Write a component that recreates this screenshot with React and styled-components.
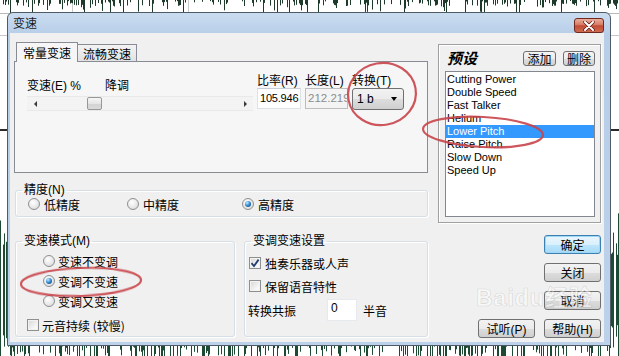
import React from 'react';
import styled, { createGlobalStyle, css } from 'styled-components';

const GlobalStyle = createGlobalStyle`
  html, body { margin: 0; padding: 0; background: #fff; }
  body {
    font-family: "Liberation Sans", "Noto Sans CJK SC", sans-serif;
    font-size: 12px;
    color: #000;
  }
  * { box-sizing: border-box; }
`;

const Stage = styled.div`
  position: relative;
  width: 619px;
  height: 356px;
  overflow: hidden;
  background: #fff;
`;

const WaveSvg = styled.svg`
  position: absolute;
  left: 0;
  top: 0;
`;

const Overlay = styled.svg`
  position: absolute;
  left: 0;
  top: 0;
  pointer-events: none;
  z-index: 5;
`;

const Watermark = styled.div`
  position: absolute;
  left: 476px;
  top: 279px;
  z-index: 4;
  font-family: "Liberation Sans", "Noto Sans CJK SC", sans-serif;
  font-weight: bold;
  font-size: 23px;
  letter-spacing: 1px;
  color: rgba(255, 255, 255, 0.5);
  -webkit-text-stroke: 0.6px rgba(140, 140, 140, 0.3);
  pointer-events: none;
`;

/* ---------- dialog frame ---------- */
const Dialog = styled.div`
  position: absolute;
  left: 7px;
  top: 12px;
  width: 604px;
  height: 334px;
  border: 1px solid #4f5a66;
  border-radius: 6px 6px 0 0;
  background: linear-gradient(#cadcf0, #b7cee8 22px, #bcd2eb);
  display: flex;
  flex-direction: column;
  padding: 0 6px 3px 2px;
`;

const TitleBar = styled.div`
  height: 21px;
  display: flex;
  align-items: center;
  justify-content: space-between;
  padding-left: 3px;
`;

const TitleText = styled.span`
  font-family: "Noto Sans CJK SC", sans-serif;
  font-size: 12px;
  color: #1b1b1b;
  line-height: 14px;
`;

const CloseButton = styled.div`
  width: 30px;
  height: 15px;
  margin-top: 5px;
  border: 1px solid #6e2a21;
  border-radius: 3px;
  background: linear-gradient(#e9ad9c, #d77a65 45%, #c24b34 52%, #cf6a50);
  display: flex;
  align-items: center;
  justify-content: center;
`;

const Client = styled.div`
  flex: 1;
  background: #f0f0f0;
  display: grid;
  grid-template-columns: 414px 163px;
  column-gap: 10px;
  padding: 9px 3px 4px 4px;
`;

const LeftColumn = styled.div`
  display: flex;
  flex-direction: column;
`;

/* ---------- tabs ---------- */
const TabStrip = styled.div`
  height: 19px;
  display: flex;
  align-items: flex-end;
  padding-left: 2px;
  position: relative;
  z-index: 1;
`;

const Tab = styled.div`
  font-family: "Noto Sans CJK SC", sans-serif;
  font-size: 12px;
  display: flex;
  align-items: center;
  border: 1px solid #898c95;
  border-bottom: none;
  ${(p) =>
    p.$active
      ? css`
          height: 20px;
          margin-bottom: -1px;
          padding: 0 6px;
          background: #f6f6f6;
        `
      : css`
          height: 17px;
          padding: 0 5px;
          border-left: none;
          background: linear-gradient(#f3f3f3, #e2e2e2);
        `}
`;

const TabPanel = styled.div`
  height: 112px;
  border: 1px solid #898c95;
  background: #f6f6f6;
  display: flex;
  align-items: flex-start;
  gap: 4px;
  padding-left: 12px;
`;

const SpeedBlock = styled.div`
  margin-top: 17px;
  width: 226px;
`;

const LabelRow = styled.div`
  height: 14px;
  display: flex;
  line-height: 14px;
`;

const Label = styled.span`
  font-family: "Liberation Sans", "Noto Sans CJK SC", sans-serif;
  font-size: 12px;
  line-height: 14px;
  white-space: nowrap;
  ${(p) => p.$width && css`width: ${p.$width}px;`}
`;

const ScrollBar = styled.div`
  margin-top: 3px;
  height: 15px;
  display: flex;
  align-items: center;
  background: #f3f3f3;
  border-top: 1px solid #e9e9e9;
  border-bottom: 1px solid #e9e9e9;
`;

const ArrowBtn = styled.div`
  width: 16px;
  height: 13px;
  display: flex;
  align-items: center;
  justify-content: center;
  &::before {
    content: '';
    border-top: 3px solid transparent;
    border-bottom: 3px solid transparent;
    ${(p) =>
      p.$dir === 'left'
        ? css`border-right: 3px solid #3a3a3a;`
        : css`border-left: 3px solid #3a3a3a;`}
  }
`;

const Track = styled.div`
  flex: 1;
  height: 13px;
  display: flex;
  align-items: center;
`;

const Thumb = styled.div`
  width: 15px;
  height: 13px;
  margin-left: ${(p) => p.$offset}px;
  border: 1px solid #979797;
  border-radius: 2px;
  background: linear-gradient(#f6f6f6, #e6e6e6 50%, #d3d3d3 51%, #dadada);
`;

const Field = styled.div`
  margin-top: 12px;
  display: flex;
  flex-direction: column;
  width: ${(p) => p.$width}px;
`;

const TextBox = styled.div`
  height: 21px;
  border: 1px solid #dde2e8;
  border-top-color: #c9ced6;
  background: #fff;
  font-family: "Liberation Sans", sans-serif;
  font-size: 11px;
  letter-spacing: -0.2px;
  padding: 3px 0 0 2px;
  overflow: hidden;
  white-space: nowrap;
  ${(p) =>
    p.$disabled &&
    css`
      background: #f4f4f4;
      border-color: #bdbdbd;
      color: #8d8d8d;
      letter-spacing: 0;
      font-size: 11.5px;
    `}
`;

const Combo = styled.div`
  height: 22px;
  border: 1px solid #707070;
  border-radius: 3px;
  background: linear-gradient(#f2f2f2, #ebebeb 50%, #dddddd 51%, #cfcfcf);
  display: flex;
  align-items: center;
  justify-content: space-between;
  padding: 0 6px 0 4px;
  font-family: "Liberation Sans", sans-serif;
  font-size: 12px;
  &::after {
    content: '';
    border-top: 4px solid #000;
    border-left: 3.5px solid transparent;
    border-right: 3.5px solid transparent;
  }
`;

/* ---------- group boxes ---------- */
const GroupBox = styled.fieldset`
  margin: 0;
  padding: 0;
  min-width: 0;
  border: 1px solid #d5dfe5;
  border-radius: 3px;
  box-shadow: inset 1px 1px 0 #fff, 1px 1px 0 #fff;
`;

const Legend = styled.legend`
  padding: 0 2px;
  margin-left: 6px;
  font-family: "Liberation Sans", "Noto Sans CJK SC", sans-serif;
  font-size: 12px;
  line-height: 14px;
  height: 14px;
`;

const PrecisionGroup = styled(GroupBox)`
  margin: 10px 0 0 1px;
`;

const PrecisionRow = styled.div`
  display: grid;
  grid-template-columns: 99px 115px auto;
  padding: 0 0 5px 12px;
  height: 19px;
`;

const Option = styled.div`
  display: flex;
  align-items: center;
  gap: ${(p) => p.$gap || 4}px;
  height: ${(p) => p.$h || 14}px;
  font-family: "Noto Sans CJK SC", sans-serif;
  font-size: 12px;
  white-space: nowrap;
  ${(p) => p.$indent && css`margin-left: ${p.$indent}px;`}
  ${(p) => p.$mt && css`margin-top: ${p.$mt}px;`}
`;

const Radio = styled.span`
  width: 12px;
  height: 12px;
  flex: none;
  border-radius: 50%;
  border: 1px solid #8e8f8f;
  background: radial-gradient(circle at 40% 35%, #ffffff, #e6e6e6 60%, #d0d0d0);
  display: flex;
  align-items: center;
  justify-content: center;
  ${(p) =>
    p.$checked &&
    css`
      &::after {
        content: '';
        width: 6px;
        height: 6px;
        border-radius: 50%;
        background: radial-gradient(circle at 35% 30%, #c8ecff, #3a8fd6 45%, #0c3a66 95%);
      }
    `}
`;

const CheckBox = styled.span`
  width: 12px;
  height: 12px;
  flex: none;
  border: 1px solid #8e8f8f;
  background: linear-gradient(135deg, #d6d6d6, #f6f6f6 70%, #ffffff);
  box-shadow: inset 0 0 0 1px #f2f2f2;
  display: flex;
  align-items: center;
  justify-content: center;
`;

const BottomRow = styled.div`
  margin-top: 17px;
  height: 103px;
  padding-left: 1px;
  display: grid;
  grid-template-columns: 220px 184px;
  column-gap: 9px;
`;

const ModeBody = styled.div`
  padding: 3px 0 0 11px;
`;

const SettingsBody = styled.div`
  padding: 5px 0 0 4px;
`;

const ResonanceRow = styled.div`
  margin-top: 3px;
  height: 22px;
  display: flex;
  align-items: center;
  margin-left: -1px;
  font-family: "Noto Sans CJK SC", sans-serif;
  font-size: 12px;
`;

const SmallInput = styled.div`
  width: 30px;
  height: 22px;
  margin-left: 31px;
  margin-right: 6px;
  background: #fff;
  border: 1px solid #e6e9ed;
  font-family: "Liberation Sans", sans-serif;
  font-size: 12px;
  padding: 1px 0 0 3px;
`;

/* ---------- right column ---------- */
const RightColumn = styled.div`
  display: flex;
  flex-direction: column;
  padding-top: 2px;
`;

const PresetPanel = styled.div`
  height: 179px;
  border: 1px solid #a0a0a0;
  box-shadow: inset 1px 1px 0 #fff, 1px 1px 0 #fff;
  padding: 4px 5px 5px 6px;
  display: flex;
  flex-direction: column;
`;

const PresetHeader = styled.div`
  height: 18px;
  display: flex;
  align-items: center;
  justify-content: space-between;
`;

const PresetTitle = styled.span`
  font-family: "Noto Sans CJK SC", serif;
  font-weight: bold;
  font-style: italic;
  font-size: 15px;
  line-height: 16px;
  margin-left: 2px;
`;

const HeaderButtons = styled.div`
  display: flex;
  gap: 7px;
`;

const MiniButton = styled.div`
  width: ${(p) => p.$w}px;
  height: 15px;
  border: 1px solid #707070;
  border-radius: 3px;
  background: linear-gradient(#f4f4f4, #ececec 50%, #dfdfdf 51%, #d3d3d3);
  font-family: "Noto Sans CJK SC", sans-serif;
  font-size: 12px;
  line-height: 13px;
  display: flex;
  align-items: center;
  justify-content: center;
`;

const ListBox = styled.div`
  flex: 1;
  margin-top: 4px;
  border: 1px solid #828790;
  background: #fff;
  padding-top: 1px;
`;

const ListItem = styled.div`
  height: 13px;
  line-height: 13px;
  padding-left: 1px;
  font-family: "Liberation Sans", sans-serif;
  font-size: 11px;
  white-space: nowrap;
  ${(p) =>
    p.$selected &&
    css`
      background: #3399ff;
      color: #fff;
    `}
`;

const ButtonStack = styled.div`
  margin-top: 12px;
  display: flex;
  flex-direction: column;
  align-items: flex-end;
  gap: 9px;
`;

const ButtonRow = styled.div`
  display: flex;
  gap: 9px;
`;

const Button = styled.div`
  width: 57px;
  height: 19px;
  border: 1px solid #707070;
  border-radius: 3px;
  background: linear-gradient(#f2f2f2, #ebebeb 50%, #dddddd 51%, #cfcfcf);
  font-family: "Liberation Sans", "Noto Sans CJK SC", sans-serif;
  font-size: 12px;
  display: flex;
  align-items: center;
  justify-content: center;
  ${(p) =>
    p.$default &&
    css`
      border-color: #3c7fb1;
      box-shadow: inset 0 0 0 1px #9fd8f6;
      background: linear-gradient(#eaf6fd, #d9f0fc 50%, #bee6fd 51%, #a7d9f5);
    `}
`;

/* ---------- data ---------- */
const PRESETS = [
  'Cutting Power',
  'Double Speed',
  'Fast Talker',
  'Helium',
  'Lower Pitch',
  'Raise Pitch',
  'Slow Down',
  'Speed Up',
];

const WAVE = (() => {
  let s = 987654;
  const r = () => {
    s = (s * 16807) % 2147483647;
    return s / 2147483647;
  };
  let top = '';
  let bottom = '';
  for (let x = 0; x < 619; x++) {
    if (r() < 0.32) {
      const len = r() < 0.25 ? 5 + r() * 9 : 1 + r() * 5;
      top += `M${x + 0.5} 0V${len.toFixed(1)}`;
    }
    const amp = 35 + r() * 42;
    if (r() < 0.8) bottom += `M${x + 0.5} ${(290 - amp).toFixed(1)}V${(290 + amp).toFixed(1)}`;
  }
  return { top, bottom };
})();

function CheckMark() {
  return (
    <svg width="10" height="10" viewBox="0 0 10 10">
      <path d="M1.5 5.2 L4 8 L8.6 1.6" fill="none" stroke="#243f6b" strokeWidth="1.8" />
    </svg>
  );
}

export default function App() {
  return (
    <>
      <GlobalStyle />
      <Stage>
        <WaveSvg width="619" height="356" viewBox="0 0 619 356">
          <line x1="0" y1="13.5" x2="619" y2="13.5" stroke="#b8b8b8" />
          <line x1="0" y1="35.5" x2="619" y2="35.5" stroke="#c8c8c8" />
          <line x1="72.5" y1="0" x2="72.5" y2="12" stroke="#c8c8c8" />
          <line x1="188.5" y1="0" x2="188.5" y2="12" stroke="#c8c8c8" />
          <path d={WAVE.top} stroke="#1d3a2a" strokeWidth="1" />
          <path d={WAVE.bottom} stroke="#1c4a32" strokeWidth="1" />
          <rect x="0" y="129" width="619" height="2" fill="#2a2a2a" />
        </WaveSvg>

        <Dialog>
          <TitleBar>
            <TitleText>变速</TitleText>
            <CloseButton>
              <svg width="12" height="10" viewBox="0 0 12 10">
                <path d="M2 1 L10 9 M10 1 L2 9" stroke="#5a1a12" strokeWidth="3.4" strokeLinecap="round" />
                <path d="M2 1 L10 9 M10 1 L2 9" stroke="#fff" strokeWidth="2" strokeLinecap="round" />
              </svg>
            </CloseButton>
          </TitleBar>

          <Client>
            <LeftColumn>
              <TabStrip>
                <Tab $active>常量变速</Tab>
                <Tab>流畅变速</Tab>
              </TabStrip>
              <TabPanel>
                <SpeedBlock>
                  <LabelRow>
                    <Label $width={78}>变速(E) %</Label>
                    <Label>降调</Label>
                  </LabelRow>
                  <ScrollBar>
                    <ArrowBtn $dir="left" />
                    <Track>
                      <Thumb $offset={44} />
                    </Track>
                    <ArrowBtn $dir="right" />
                  </ScrollBar>
                </SpeedBlock>
                <Field $width={44}>
                  <Label>比率(R)</Label>
                  <TextBox>105.946</TextBox>
                </Field>
                <Field $width={43}>
                  <Label>长度(L)</Label>
                  <TextBox $disabled>212.219</TextBox>
                </Field>
                <Field $width={52}>
                  <Label>转换(T)</Label>
                  <Combo>1 b</Combo>
                </Field>
              </TabPanel>

              <PrecisionGroup>
                <Legend>精度(N)</Legend>
                <PrecisionRow>
                  <Option>
                    <Radio />
                    低精度
                  </Option>
                  <Option>
                    <Radio />
                    中精度
                  </Option>
                  <Option>
                    <Radio $checked />
                    高精度
                  </Option>
                </PrecisionRow>
              </PrecisionGroup>

              <BottomRow>
                <GroupBox>
                  <Legend>变速模式(M)</Legend>
                  <ModeBody>
                    <Option $h={20} $indent={16} $gap={3}>
                      <Radio />
                      变速不变调
                    </Option>
                    <Option $h={20} $indent={16} $gap={3}>
                      <Radio $checked />
                      变调不变速
                    </Option>
                    <Option $h={20} $indent={16} $gap={3}>
                      <Radio />
                      变调又变速
                    </Option>
                    <Option $h={20} $mt={4} $gap={3}>
                      <CheckBox />
                      元音持续 (较慢)
                    </Option>
                  </ModeBody>
                </GroupBox>
                <GroupBox>
                  <Legend>变调变速设置</Legend>
                  <SettingsBody>
                    <Option $h={20} $gap={4}>
                      <CheckBox>
                        <CheckMark />
                      </CheckBox>
                      独奏乐器或人声
                    </Option>
                    <Option $h={20} $mt={3} $gap={4}>
                      <CheckBox />
                      保留语音特性
                    </Option>
                    <ResonanceRow>
                      转换共振
                      <SmallInput>0</SmallInput>
                      半音
                    </ResonanceRow>
                  </SettingsBody>
                </GroupBox>
              </BottomRow>
            </LeftColumn>

            <RightColumn>
              <PresetPanel>
                <PresetHeader>
                  <PresetTitle>预设</PresetTitle>
                  <HeaderButtons>
                    <MiniButton $w={33}>添加</MiniButton>
                    <MiniButton $w={32}>删除</MiniButton>
                  </HeaderButtons>
                </PresetHeader>
                <ListBox>
                  {PRESETS.map((name) => (
                    <ListItem key={name} $selected={name === 'Lower Pitch'}>
                      {name}
                    </ListItem>
                  ))}
                </ListBox>
              </PresetPanel>
              <ButtonStack>
                <Button $default>确定</Button>
                <Button>关闭</Button>
                <Button>取消</Button>
                <ButtonRow>
                  <Button>试听(P)</Button>
                  <Button>帮助(H)</Button>
                </ButtonRow>
              </ButtonStack>
            </RightColumn>
          </Client>
        </Dialog>

        <Watermark>Baidu经验</Watermark>

        <Overlay width="619" height="356" viewBox="0 0 619 356">
          <g fill="none" stroke="#c8444a" strokeWidth="2.2" opacity="0.9">
            <ellipse cx="382" cy="94" rx="34" ry="31" transform="rotate(-10 382 94)" />
            <ellipse cx="483" cy="132" rx="60" ry="15" transform="rotate(3 483 132)" />
            <ellipse cx="81" cy="282" rx="60" ry="14" transform="rotate(-2 81 282)" />
          </g>
        </Overlay>
      </Stage>
    </>
  );
}
